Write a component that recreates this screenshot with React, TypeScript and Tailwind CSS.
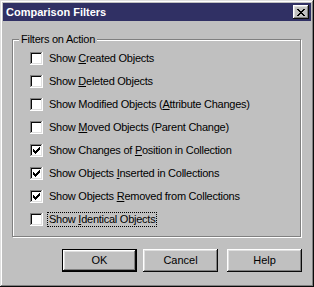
import React from "react";

const raised =
  "shadow-[inset_-1px_-1px_#0a0a0a,inset_1px_1px_#ffffff,inset_-2px_-2px_#808080,inset_2px_2px_#dfdfdf]";

function Check() {
  return (
    <svg width="7" height="7" viewBox="0 0 7 7" shapeRendering="crispEdges">
      <rect x="0" y="2" width="1" height="3" fill="#000" />
      <rect x="1" y="3" width="1" height="3" fill="#000" />
      <rect x="2" y="4" width="1" height="3" fill="#000" />
      <rect x="3" y="3" width="1" height="3" fill="#000" />
      <rect x="4" y="2" width="1" height="3" fill="#000" />
      <rect x="5" y="1" width="1" height="3" fill="#000" />
      <rect x="6" y="0" width="1" height="3" fill="#000" />
    </svg>
  );
}

function Row({
  checked,
  children,
  focused,
}: {
  checked?: boolean;
  children: React.ReactNode;
  focused?: boolean;
}) {
  return (
    <div className="flex h-[23px] items-center">
      <div className="flex h-[13px] w-[13px] shrink-0 items-center justify-center bg-white shadow-[inset_-1px_-1px_#ffffff,inset_1px_1px_#808080,inset_-2px_-2px_#dfdfdf,inset_2px_2px_#0a0a0a]">
        {checked ? <Check /> : null}
      </div>
      <span
        className={
          "ml-[4px] px-[1px] leading-[13px] tracking-[-0.25px] border " +
          (focused ? "border-dotted border-black" : "border-transparent")
        }
      >
        {children}
      </span>
    </div>
  );
}

function U({ children }: { children: React.ReactNode }) {
  return <span className="underline underline-offset-[1px]">{children}</span>;
}

export default function App() {
  return (
    <div
      className={
        "flex h-[287px] w-[314px] flex-col bg-[#c0c0c0] p-[3px] text-[11px] text-black shadow-[inset_-1px_-1px_#0a0a0a,inset_1px_1px_#dfdfdf,inset_-2px_-2px_#808080,inset_2px_2px_#ffffff]"
      }
      style={{ fontFamily: '"Liberation Sans", Arial, sans-serif' }}
    >
      <div className="flex h-[18px] items-center justify-between bg-[#303064] pl-[3px] pr-[2px]">
        <span className="text-[11px] font-bold text-white">Comparison Filters</span>
        <div
          className={
            "flex h-[14px] w-[16px] items-center justify-center bg-[#c0c0c0] " + raised
          }
        >
          <svg width="8" height="7" viewBox="0 0 8 7" shapeRendering="crispEdges">
            <path
              d="M0 0h2v1H0zM6 0h2v1H6zM1 1h2v1H1zM5 1h2v1H5zM2 2h4v1H2zM3 3h2v1H3zM2 4h4v1H2zM1 5h2v1H1zM5 5h2v1H5zM0 6h2v1H0zM6 6h2v1H6z"
              fill="#000"
            />
          </svg>
        </div>
      </div>

      <div className="ml-[9px] mt-[18px] w-[289px]">
        <div className="relative border border-[#808080] pb-[5px] pl-[17px] pt-[7px] shadow-[inset_1px_1px_#ffffff,1px_1px_#ffffff]">
          <span className="absolute left-[6px] top-[-8px] bg-[#c0c0c0] px-[2px] leading-[14px] tracking-[-0.25px]">
            Filters on Action
          </span>
          <Row>
            Show <U>C</U>reated Objects
          </Row>
          <Row>
            Show <U>D</U>eleted Objects
          </Row>
          <Row>
            Show Modified Objects (<U>A</U>ttribute Changes)
          </Row>
          <Row>
            Show <U>M</U>oved Objects (Parent Change)
          </Row>
          <Row checked>
            Show Changes of <U>P</U>osition in Collection
          </Row>
          <Row checked>
            Show Objects <U>I</U>nserted in Collections
          </Row>
          <Row checked>
            Show Objects <U>R</U>emoved from Collections
          </Row>
          <Row focused>
            Show <U>I</U>dentical Objects
          </Row>
        </div>
      </div>

      <div className="mt-[12px] flex pl-[59px]">
        <button className="h-[23px] w-[75px] border border-black bg-[#c0c0c0]">
          <div
            className={
              "flex h-full w-full items-center justify-center " + raised
            }
          >
            OK
          </div>
        </button>
        <button
          className={
            "ml-[6px] flex h-[23px] w-[75px] items-center justify-center bg-[#c0c0c0] " + raised
          }
        >
          Cancel
        </button>
        <button
          className={
            "ml-[9px] flex h-[23px] w-[75px] items-center justify-center bg-[#c0c0c0] " + raised
          }
        >
          Help
        </button>
      </div>
    </div>
  );
}
